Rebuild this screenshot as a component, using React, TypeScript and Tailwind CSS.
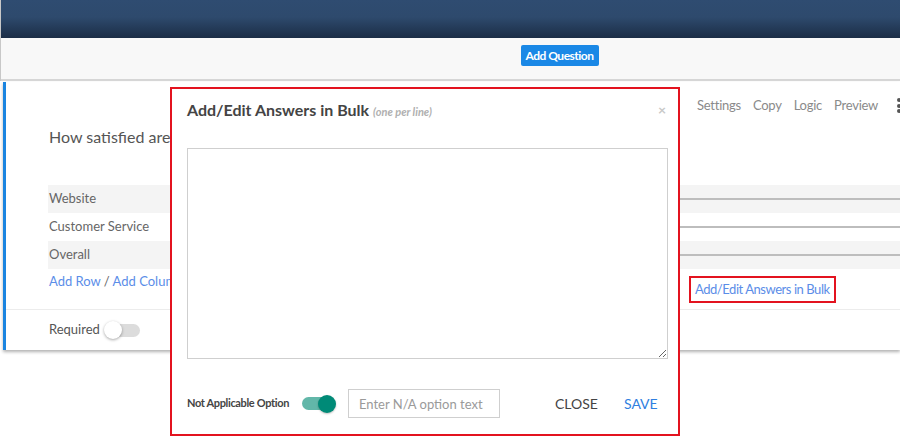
function Toggle({ on }: { on: boolean }) {
  return on ? (
    <div className="relative w-[34px] h-[18px] flex items-center">
      <div className="w-[30px] h-[13px] rounded-full bg-[#62b7a9]" />
      <div className="absolute right-0 top-0 w-[18px] h-[18px] rounded-full bg-[#008a77] shadow-[0_1px_2px_rgba(0,0,0,0.25)]" />
    </div>
  ) : (
    <div className="relative w-[36px] h-[18px] flex items-center">
      <div className="ml-[3px] w-[33px] h-[13px] rounded-full bg-[#dcdcdc]" />
      <div className="absolute left-0 top-0 w-[18px] h-[18px] rounded-full bg-white shadow-[0_1px_3px_rgba(0,0,0,0.35)]" />
    </div>
  );
}

function MatrixRow({ label, shaded }: { label: string; shaded: boolean }) {
  return (
    <div className={`flex h-7 ${shaded ? "bg-[#f4f4f4]" : "bg-white"}`}>
      <div className="w-[632px] flex items-center pl-px text-[13px] text-[#666]">{label}</div>
      <div className="flex-1 flex items-center">
        <div className="w-full h-[2px] bg-[#bdbdbd]" />
      </div>
    </div>
  );
}

function BulkModal() {
  return (
    <div className="absolute left-[170px] top-[87px] w-[510px] h-[349px] bg-white border-2 border-[#e3131f] flex flex-col">
      <div className="flex items-start justify-between pl-[15px] pr-[12px] pt-[9px]">
        <div className="flex items-baseline">
          <span className="text-[16px] font-bold text-[#444]">Add/Edit Answers in Bulk</span>
          <span className="ml-[4px] text-[11px] italic font-bold text-[#b0b0b0]">(one per line)</span>
        </div>
        <span className="text-[14px] font-bold text-[#c8c8c8] leading-none mt-[5px]">×</span>
      </div>
      <textarea className="mt-[26px] ml-[15px] w-[481px] h-[211px] border border-[#cfcfcf] outline-none resize" />
      <div className="flex items-center mt-[30px] pl-[15px] whitespace-nowrap">
        <span className="text-[11px] font-bold tracking-[-0.35px] text-[#444]">Not Applicable Option</span>
        <div className="ml-[13px]">
          <Toggle on />
        </div>
        <input
          className="ml-[12px] w-[152px] h-[29px] border border-[#cfcfcf] px-[10px] text-[13px] outline-none placeholder:text-[#9a9a9a]"
          placeholder="Enter N/A option text"
        />
        <span className="ml-[55px] text-[14px] text-[#444]">CLOSE</span>
        <span className="ml-[26px] text-[14px] text-[#2f7fe0]">SAVE</span>
      </div>
    </div>
  );
}

export default function App() {
  return (
    <div className="relative w-[900px] h-[439px] bg-white overflow-hidden font-['Lato',sans-serif]">
      <div className="border-l border-[#c8c8c8]">
        <div className="h-[38px] bg-[linear-gradient(to_bottom,#2f4c71_0%,#2e4a6d_45%,#1b2d46_100%)]" />
        <div className="h-[43px] bg-[#f8f8f8] border-b-2 border-[#d6d6d6] flex items-center justify-center">
          <button className="ml-[218px] mb-[6px] bg-[#1a88e6] text-white text-[12px] font-bold tracking-[-0.5px] px-[5px] h-[21px] rounded-[2px]">
            Add Question
          </button>
        </div>
      </div>

      <div className="mt-px ml-[3px] border-l-[3px] border-[#1a84e0] bg-white shadow-[0_2px_3px_rgba(0,0,0,0.3)]">
        <div className="h-[43px] flex items-center pl-[691px] gap-[12px] text-[13px] tracking-[-0.25px] text-[#8a8a8a] pt-[4px]">
          <span>Settings</span>
          <span>Copy</span>
          <span>Logic</span>
          <span>Preview</span>
          <div className="ml-[7px] flex flex-col gap-[1.5px]">
            <div className="w-[4px] h-[4px] rounded-full bg-[#555]" />
            <div className="w-[4px] h-[4px] rounded-full bg-[#555]" />
            <div className="w-[4px] h-[4px] rounded-full bg-[#555]" />
          </div>
        </div>
        <div className="pl-[43px] h-[60px] text-[16px] text-[#555]">How satisfied are you with our services?</div>
        <div className="pl-[42px]">
          <MatrixRow label="Website" shaded />
          <MatrixRow label="Customer Service" shaded={false} />
          <MatrixRow label="Overall" shaded />
          <div className="flex h-[40px]">
            <div className="w-[641px] pt-[3px] pl-px text-[13px] text-[#5b8de8]">
              Add Row <span className="text-[#666]">/</span> Add Column
            </div>
            <div className="pt-[7px]">
              <div className="border-2 border-[#e3131f] px-[4px] h-[27px] flex items-center text-[13px] tracking-[-0.45px] text-[#5b8de8]">
                Add/Edit Answers in Bulk
              </div>
            </div>
          </div>
        </div>
        <div className="border-t border-[#ececec] h-[41px] flex items-center pl-[43px]">
          <span className="text-[13px] text-[#555]">Required</span>
          <div className="ml-[4px]">
            <Toggle on={false} />
          </div>
        </div>
      </div>

      <BulkModal />
    </div>
  );
}
